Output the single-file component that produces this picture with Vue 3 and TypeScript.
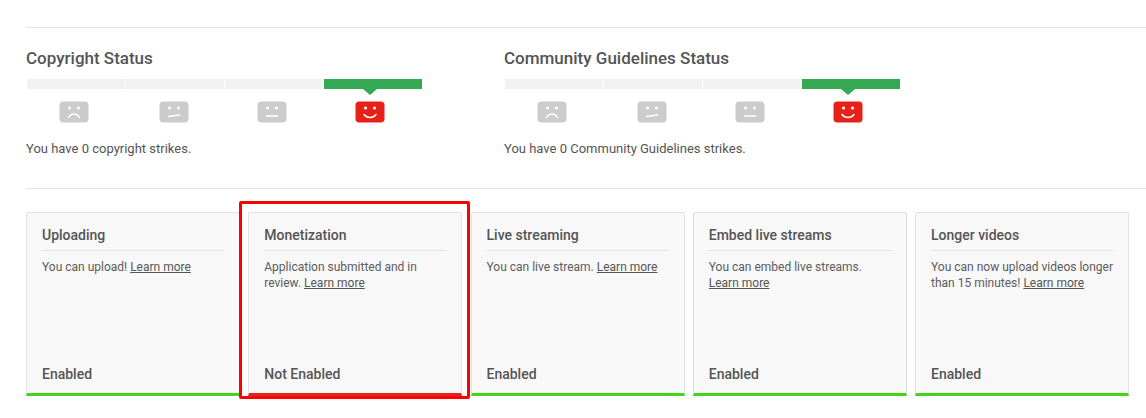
<template>
  <div class="page">
    <section class="status-row">
      <div v-for="s in statuses" :key="s.title" class="status">
        <h2 class="status-title">{{ s.title }}</h2>
        <div class="bars">
          <div v-for="(f, i) in faces" :key="i" :class="['bar', { active: i === 3 }]"></div>
        </div>
        <div class="faces">
          <svg v-for="(f, i) in faces" :key="i" class="face" width="30" height="22" viewBox="0 0 30 22">
            <path
              d="M4 .5h22c2 0 3.500 1.500 3.500 3.500v14c0 2-1.500 3.500-3.500 3.500H4c-2 0-3.500-1.500-3.500-3.500V4C.5 2 2 .5 4 .5z"
              :fill="i === 3 ? '#e62117' : '#cccccc'"
            />
            <circle cx="10.500" cy="7" r="1.600" fill="#fff" />
            <circle cx="19.500" cy="7" r="1.600" fill="#fff" />
            <path :d="f" fill="none" stroke="#fff" stroke-width="1.500" stroke-linecap="round" />
          </svg>
        </div>
        <p class="status-text">{{ s.text }}</p>
      </div>
    </section>

    <section class="cards">
      <div v-for="c in cards" :key="c.title" :class="['card', { off: !c.enabled }]">
        <h3 class="card-title">{{ c.title }}</h3>
        <p class="card-text">{{ c.text }} <a class="more">Learn more</a></p>
        <div class="card-state">{{ c.enabled ? 'Enabled' : 'Not Enabled' }}</div>
      </div>
    </section>

    <div class="highlight"></div>
  </div>
</template>

<script setup lang="ts">
interface Feature {
  title: string;
  text: string;
  enabled: boolean;
}

const statuses = [
  { title: 'Copyright Status', text: 'You have 0 copyright strikes.' },
  { title: 'Community Guidelines Status', text: 'You have 0 Community Guidelines strikes.' }
];

// mouth of each face, worst to best
const faces = [
  'M9.500 16.500c1.500-2.800 3.500-3.500 5.500-3.500s4 .7 5.500 3.500',
  'M9.500 15.500l11-1.500',
  'M9.500 15h11',
  'M9 13.500c1.500 2 3.500 3 6 3s4.500-1 6-3'
];

const cards: Feature[] = [
  { title: 'Uploading', text: 'You can upload!', enabled: true },
  { title: 'Monetization', text: 'Application submitted and in review.', enabled: false },
  { title: 'Live streaming', text: 'You can live stream.', enabled: true },
  { title: 'Embed live streams', text: 'You can embed live streams.', enabled: true },
  { title: 'Longer videos', text: 'You can now upload videos longer than 15 minutes!', enabled: true }
];
</script>

<style>
html,
body {
  margin: 0;
  background: #fff;
  overflow: hidden;
}
</style>

<style scoped>
.page {
  position: relative;
  width: 1146px;
  height: 418px;
  box-sizing: border-box;
  padding: 27px 0 0 26px;
  font-family: Roboto, "Liberation Sans", sans-serif;
  color: #555;
}

.status-row {
  display: flex;
  gap: 82px;
  height: 162px;
  box-sizing: border-box;
  padding-top: 20px;
  border-top: 1px solid #e2e2e2;
  border-bottom: 1px solid #e2e2e2;
}

.status {
  width: 396px;
}

.status-title {
  margin: 0;
  font-size: 17px;
  font-weight: 500;
  line-height: 20px;
}

.bars {
  display: flex;
  gap: 1px;
  margin-top: 11px;
  padding-left: 1px;
}

.bar {
  flex: 1;
  height: 10px;
  background: #f1f1f1;
}

.bar.active {
  position: relative;
  background: #34a853;
}

.bar.active::after {
  content: '';
  position: absolute;
  left: 39px;
  top: 10px;
  border: 7px solid transparent;
  border-top: 6px solid #34a853;
  border-bottom: 0;
}

.faces {
  display: flex;
  gap: 68px;
  margin-top: 12px;
  padding-left: 33px;
}

.face {
  display: block;
}

.face:nth-child(2) {
  margin-left: 2px;
}

.status-text {
  margin: 17px 0 0;
  font-size: 13px;
  line-height: 18px;
}

.cards {
  display: flex;
  gap: 8.250px;
  width: 1103px;
  margin-top: 23px;
}

.card {
  flex: 1;
  height: 184px;
  box-sizing: border-box;
  display: flex;
  flex-direction: column;
  padding: 12px 15px 9px;
  background: #f8f8f8;
  border: 1px solid #e2e2e2;
  border-bottom: 3px solid #44d41a;
  border-radius: 2px 2px 0 0;
}

.card.off {
  border-bottom-color: #e62117;
}

.card-title {
  margin: 0;
  padding-bottom: 5px;
  font-size: 14px;
  font-weight: 500;
  line-height: 20px;
  border-bottom: 1px solid #e2e2e2;
}

.card-text {
  flex: 1;
  margin: 0;
  padding-top: 8px;
  font-size: 12px;
  line-height: 16px;
  color: #5c5c5c;
}

.more {
  color: #555;
  text-decoration: underline;
}

.card-state {
  font-size: 14px;
  font-weight: 500;
  line-height: 20px;
}

.highlight {
  position: absolute;
  left: 239px;
  top: 201px;
  width: 231px;
  height: 198px;
  box-sizing: border-box;
  border: 3px solid #ff0000;
  border-radius: 2px;
  pointer-events: none;
}
</style>
